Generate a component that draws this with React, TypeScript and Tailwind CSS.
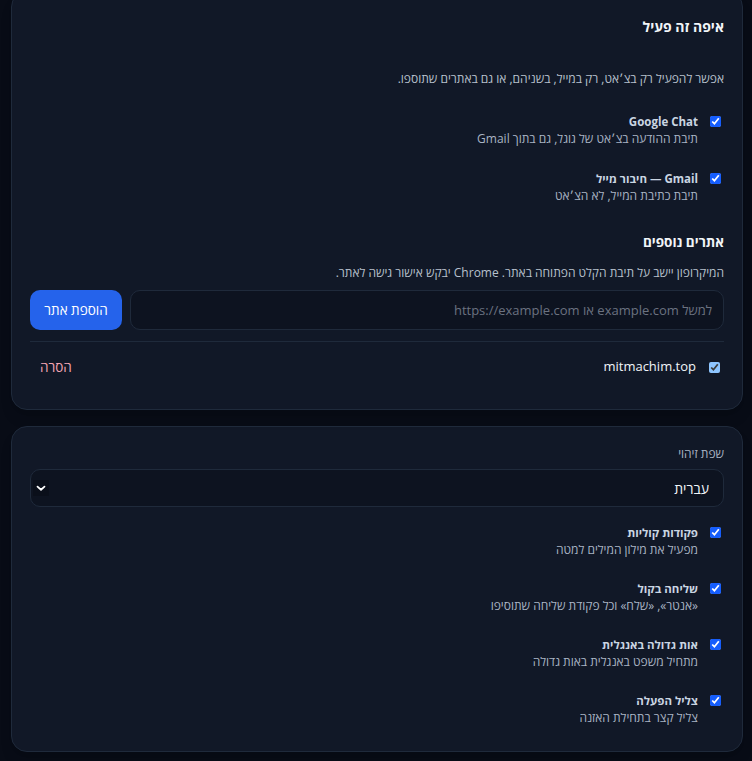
import { useState } from "react";

const font = {
  fontFamily: '"Segoe UI", "Open Sans", "Liberation Sans", "DejaVu Sans", sans-serif',
};

type ToggleRowProps = {
  label: string;
  hint: string;
  checked: boolean;
  onChange: (v: boolean) => void;
};

function ToggleRow({ label, hint, checked, onChange }: ToggleRowProps) {
  return (
    <label className="flex items-start gap-[12px]">
      <input
        type="checkbox"
        checked={checked}
        onChange={(e) => onChange(e.target.checked)}
        className="ms-[3px] mt-[3px] size-[11px] shrink-0 accent-blue-600"
      />
      <span className="flex flex-col">
        <span className="text-[11.5px] leading-[17px] font-bold text-slate-300">
          {label}
        </span>
        <span className="text-[12px] leading-[17px] text-[#a9b4c4]">
          {hint}
        </span>
      </span>
    </label>
  );
}

export default function App() {
  const [where, setWhere] = useState({ chat: true, gmail: true });
  const [site, setSite] = useState(true);
  const [opts, setOpts] = useState({
    commands: true,
    send: true,
    capital: true,
    sound: true,
  });

  return (
    <div
      dir="rtl"
      style={font}
      className="min-h-screen bg-[#080c16] pr-[9px] pl-[11px] [color-scheme:dark]"
    >
      <div className="-mt-[9px] flex flex-col gap-4 pb-3">
        <section className="rounded-2xl border border-[#1f2a3b] bg-[#111827] px-[18px] pt-[24px] pb-[17px] shadow-lg">
          <h2 className="text-[14px] leading-[22px] font-bold text-slate-100">
            איפה זה פעיל
          </h2>
          <p className="mt-[32px] text-[12px] leading-[17px] text-[#b8c1cd]">
            אפשר להפעיל רק בצ׳אט, רק במייל, בשניהם, או גם באתרים שתוספו.
          </p>

          <div className="mt-[26px] flex flex-col gap-[23px]">
            <ToggleRow
              label="Google Chat"
              hint="תיבת ההודעה בצ׳אט של גוגל, גם בתוך Gmail"
              checked={where.chat}
              onChange={(v) => setWhere({ ...where, chat: v })}
            />
            <ToggleRow
              label="Gmail — חיבור מייל"
              hint="תיבת כתיבת המייל, לא הצ׳אט"
              checked={where.gmail}
              onChange={(v) => setWhere({ ...where, gmail: v })}
            />
          </div>

          <h3 className="mt-[28px] text-[13.5px] leading-[20px] font-bold text-slate-100">
            אתרים נוספים
          </h3>
          <p className="mt-[12px] text-[12px] leading-[17px] text-[#b8c1cd]">
            המיקרופון יישב על תיבת הקלט הפתוחה באתר. Chrome יבקש אישור גישה לאתר.
          </p>

          <div className="mt-[9px] flex gap-2">
            <input
              type="text"
              placeholder="למשל example.com או https://example.com"
              className="h-[40px] flex-1 rounded-[10px] border border-[#1f2a3b] bg-[#0d1320] px-[11px] text-[13px] text-slate-200 placeholder:text-[#6b7280] focus:outline-none"
            />
            <button className="h-[40px] w-[92px] rounded-[10px] bg-[#2563eb] text-[13.5px] font-medium text-white">
              הוספת אתר
            </button>
          </div>

          <div className="mt-[11px] border-t border-[#1f2a3b]" />

          <div className="flex h-[50px] items-center justify-between">
            <label className="flex items-center gap-[13px]">
              <input
                type="checkbox"
                checked={site}
                onChange={(e) => setSite(e.target.checked)}
                className="ms-[4px] size-[11px] accent-blue-300"
              />
              <span className="text-[13px] text-slate-100">mitmachim.top</span>
            </label>
            <button className="px-2.5 text-[13.5px] text-[#f3a5b3]">הסרה</button>
          </div>
        </section>

        <section className="rounded-2xl border border-[#1f2a3b] bg-[#111827] px-[18px] pt-[19px] pb-[25px] shadow-lg">
          <div className="text-[12px] leading-[16px] text-[#a9b4c4]">שפת זיהוי</div>
          <div className="relative mt-[7px]">
            <select className="h-[38px] w-full appearance-none rounded-[10px] border border-[#1f2a3b] bg-[#0d1320] px-[14px] text-[14px] text-slate-100 focus:outline-none">
              <option>עברית</option>
              <option>English</option>
            </select>
            <span className="pointer-events-none absolute top-1/2 left-[3px] flex size-[16px] -translate-y-1/2 items-center justify-center bg-[#0a0f1a]">
              <svg
                viewBox="0 0 16 16"
                className="size-[14px]"
                fill="none"
                stroke="white"
                strokeWidth="2"
                strokeLinecap="round"
                strokeLinejoin="round"
              >
                <path d="M4 6.5l4 3.5 4-3.5" />
              </svg>
            </span>
          </div>

          <div className="mt-[17px] flex flex-col gap-[22px]">
            <ToggleRow
              label="פקודות קוליות"
              hint="מפעיל את מילון המילים למטה"
              checked={opts.commands}
              onChange={(v) => setOpts({ ...opts, commands: v })}
            />
            <ToggleRow
              label="שליחה בקול"
              hint="«אנטר», «שלח» וכל פקודת שליחה שתוסיפו"
              checked={opts.send}
              onChange={(v) => setOpts({ ...opts, send: v })}
            />
            <ToggleRow
              label="אות גדולה באנגלית"
              hint="מתחיל משפט באנגלית באות גדולה"
              checked={opts.capital}
              onChange={(v) => setOpts({ ...opts, capital: v })}
            />
            <ToggleRow
              label="צליל הפעלה"
              hint="צליל קצר בתחילת האזנה"
              checked={opts.sound}
              onChange={(v) => setOpts({ ...opts, sound: v })}
            />
          </div>
        </section>
      </div>
    </div>
  );
}
